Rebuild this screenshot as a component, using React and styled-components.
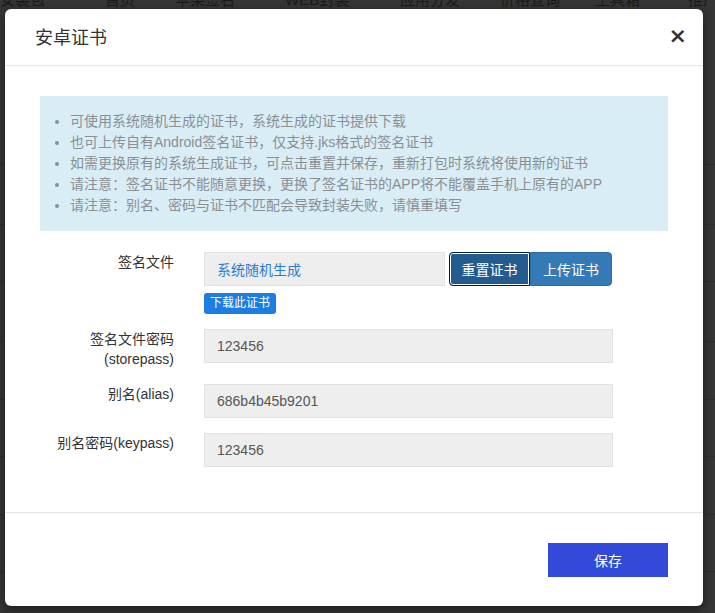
import React from 'react';
import styled, { createGlobalStyle } from 'styled-components';

const GlobalStyle = createGlobalStyle`
  html, body {
    margin: 0;
    padding: 0;
    background: #333333;
    font-family: "Liberation Sans", "Noto Sans CJK SC", sans-serif;
  }
  * { box-sizing: border-box; }
`

const Page = styled.div`
  position: relative;
  width: 715px;
  height: 613px;
  overflow: hidden;
  background: #353535;
`

const NavBar = styled.div`
  display: flex;
  align-items: flex-end;
  height: 9px;
  overflow: hidden;
  font-size: 15px;
  line-height: 18px;
  color: #1a1a1a;
`

const NavItem = styled.span`
  width: ${({ w }) => w}px;
  flex: none;
  white-space: nowrap;
`

const Rows = styled.div`
  display: flex;
  flex-direction: column;
  margin-top: 99px;
`

const BgRow = styled.div`
  height: ${({ h }) => h}px;
  border-bottom: 1px solid #2c2c2c;
`

const Backdrop = styled.div`
  position: absolute;
  inset: 0;
  padding: 9px 12px 0 5px;
`

const Modal = styled.div`
  width: 698px;
  height: 597px;
  background: #fff;
  border-radius: 6px;
  display: flex;
  flex-direction: column;
  box-shadow: 0 3px 9px rgba(0, 0, 0, 0.5);
`

const Header = styled.div`
  height: 57px;
  display: flex;
  align-items: center;
  justify-content: space-between;
  padding: 0 15px 2px 30px;
  border-bottom: 1px solid #e5e5e5;
`

const Title = styled.h4`
  margin: 0;
  font-size: 18px;
  font-weight: 400;
  color: #333;
`

const Close = styled.button`
  border: 0;
  background: none;
  padding: 0 1px 0 0;
  font-size: 22px;
  line-height: 1;
  font-weight: 700;
  color: #000;
  opacity: 0.8;
  cursor: pointer;
  font-family: "DejaVu Sans", sans-serif;
`

const Body = styled.div`
  flex: 1;
  padding: 30px 35px 0 35px;
  border-bottom: 1px solid #e5e5e5;
`

const Alert = styled.div`
  background: #d9edf7;
  padding: 15px 15px 15px 0;
  margin-bottom: 21px;
`

const Notes = styled.ul`
  margin: 0;
  padding-left: 30px;
  font-size: 14px;
  line-height: 21px;
  color: #8a8f94;
`

const FormRow = styled.div`
  display: grid;
  grid-template-columns: 134px 409px;
  column-gap: 30px;
  margin-bottom: 15px;
`

const Label = styled.label`
  text-align: right;
  font-size: 14px;
  line-height: 20px;
  color: #333;
`

const Control = styled.div`
  display: flex;
  flex-direction: column;
  align-items: flex-start;
`

const InputLine = styled.div`
  display: flex;
  align-items: center;
  width: 100%;
`

const Input = styled.input`
  width: ${({ w }) => w || '100%'};
  height: 34px;
  padding: 0 12px;
  border: 1px solid #e2e2e2;
  background: #eeeeee;
  font-family: inherit;
  font-size: 14px;
  color: ${({ link }) => (link ? '#2a7bd0' : '#555')};
  outline: none;
`

const BtnGroup = styled.div`
  display: flex;
  margin-left: 4px;
`

const GroupBtn = styled.button`
  height: 34px;
  padding: 0 11px;
  font-family: inherit;
  font-size: 14px;
  color: #fff;
  border: 1px solid ${({ active }) => (active ? '#0a1f33' : '#2e6da4')};
  background: ${({ active }) => (active ? '#245b8f' : '#337ab7')};
  box-shadow: ${({ active }) => (active ? 'inset 0 0 0 1px #fff' : 'none')};
  border-radius: ${({ last }) => (last ? '0 4px 4px 0' : '4px 0 0 4px')};
  width: ${({ w }) => w}px;
  cursor: pointer;
`

const Badge = styled.span`
  margin-top: 7px;
  height: 21px;
  padding: 0 6px;
  border-radius: 3px;
  background: #1a7ee2;
  color: #fff;
  font-size: 12px;
  line-height: 21px;
`

const Footer = styled.div`
  display: flex;
  justify-content: flex-end;
  padding: 30px 35px 29px;
`

const SaveBtn = styled.button`
  width: 120px;
  height: 34px;
  border: 0;
  background: #3249d9;
  color: #fff;
  font-family: inherit;
  font-size: 14px;
  cursor: pointer;
`

const nav = [
  ['安装包', 105], ['首页', 70], ['苹果签名', 110], ['WEB封装', 115],
  ['应用分发', 100], ['价格查询', 95], ['工具箱', 93], ['推广', 60],
]

const notes = [
  '可使用系统随机生成的证书，系统生成的证书提供下载',
  '也可上传自有Android签名证书，仅支持.jks格式的签名证书',
  '如需更换原有的系统生成证书，可点击重置并保存，重新打包时系统将使用新的证书',
  '请注意：签名证书不能随意更换，更换了签名证书的APP将不能覆盖手机上原有的APP',
  '请注意：别名、密码与证书不匹配会导致封装失败，请慎重填写',
]

const App = () => {
  return (
    <>
      <GlobalStyle />
      <Page>
        <NavBar>
          {nav.map(([t, w]) => <NavItem key={t} w={w}>{t}</NavItem>)}
        </NavBar>
        <Rows>
          {[57, 60, 57, 60, 58, 57, 58, 57, 50].map((h, i) => <BgRow key={i} h={h} />)}
        </Rows>
        <Backdrop>
          <Modal>
            <Header>
              <Title>安卓证书</Title>
              <Close aria-label="close">×</Close>
            </Header>
            <Body>
              <Alert>
                <Notes>
                  {notes.map((n) => <li key={n}>{n}</li>)}
                </Notes>
              </Alert>

              <FormRow>
                <Label>签名文件</Label>
                <Control>
                  <InputLine>
                    <Input w="241px" link readOnly value="系统随机生成" />
                    <BtnGroup>
                      <GroupBtn active w={81}>重置证书</GroupBtn>
                      <GroupBtn last w={82}>上传证书</GroupBtn>
                    </BtnGroup>
                  </InputLine>
                  <Badge>下载此证书</Badge>
                </Control>
              </FormRow>

              <FormRow>
                <Label>签名文件密码<br />(storepass)</Label>
                <Control>
                  <Input readOnly value="123456" />
                </Control>
              </FormRow>

              <FormRow>
                <Label>别名(alias)</Label>
                <Control>
                  <Input readOnly value="686b4b45b9201" />
                </Control>
              </FormRow>

              <FormRow>
                <Label>别名密码(keypass)</Label>
                <Control>
                  <Input readOnly value="123456" />
                </Control>
              </FormRow>
            </Body>
            <Footer>
              <SaveBtn>保存</SaveBtn>
            </Footer>
          </Modal>
        </Backdrop>
      </Page>
    </>
  );
}

export default App;
